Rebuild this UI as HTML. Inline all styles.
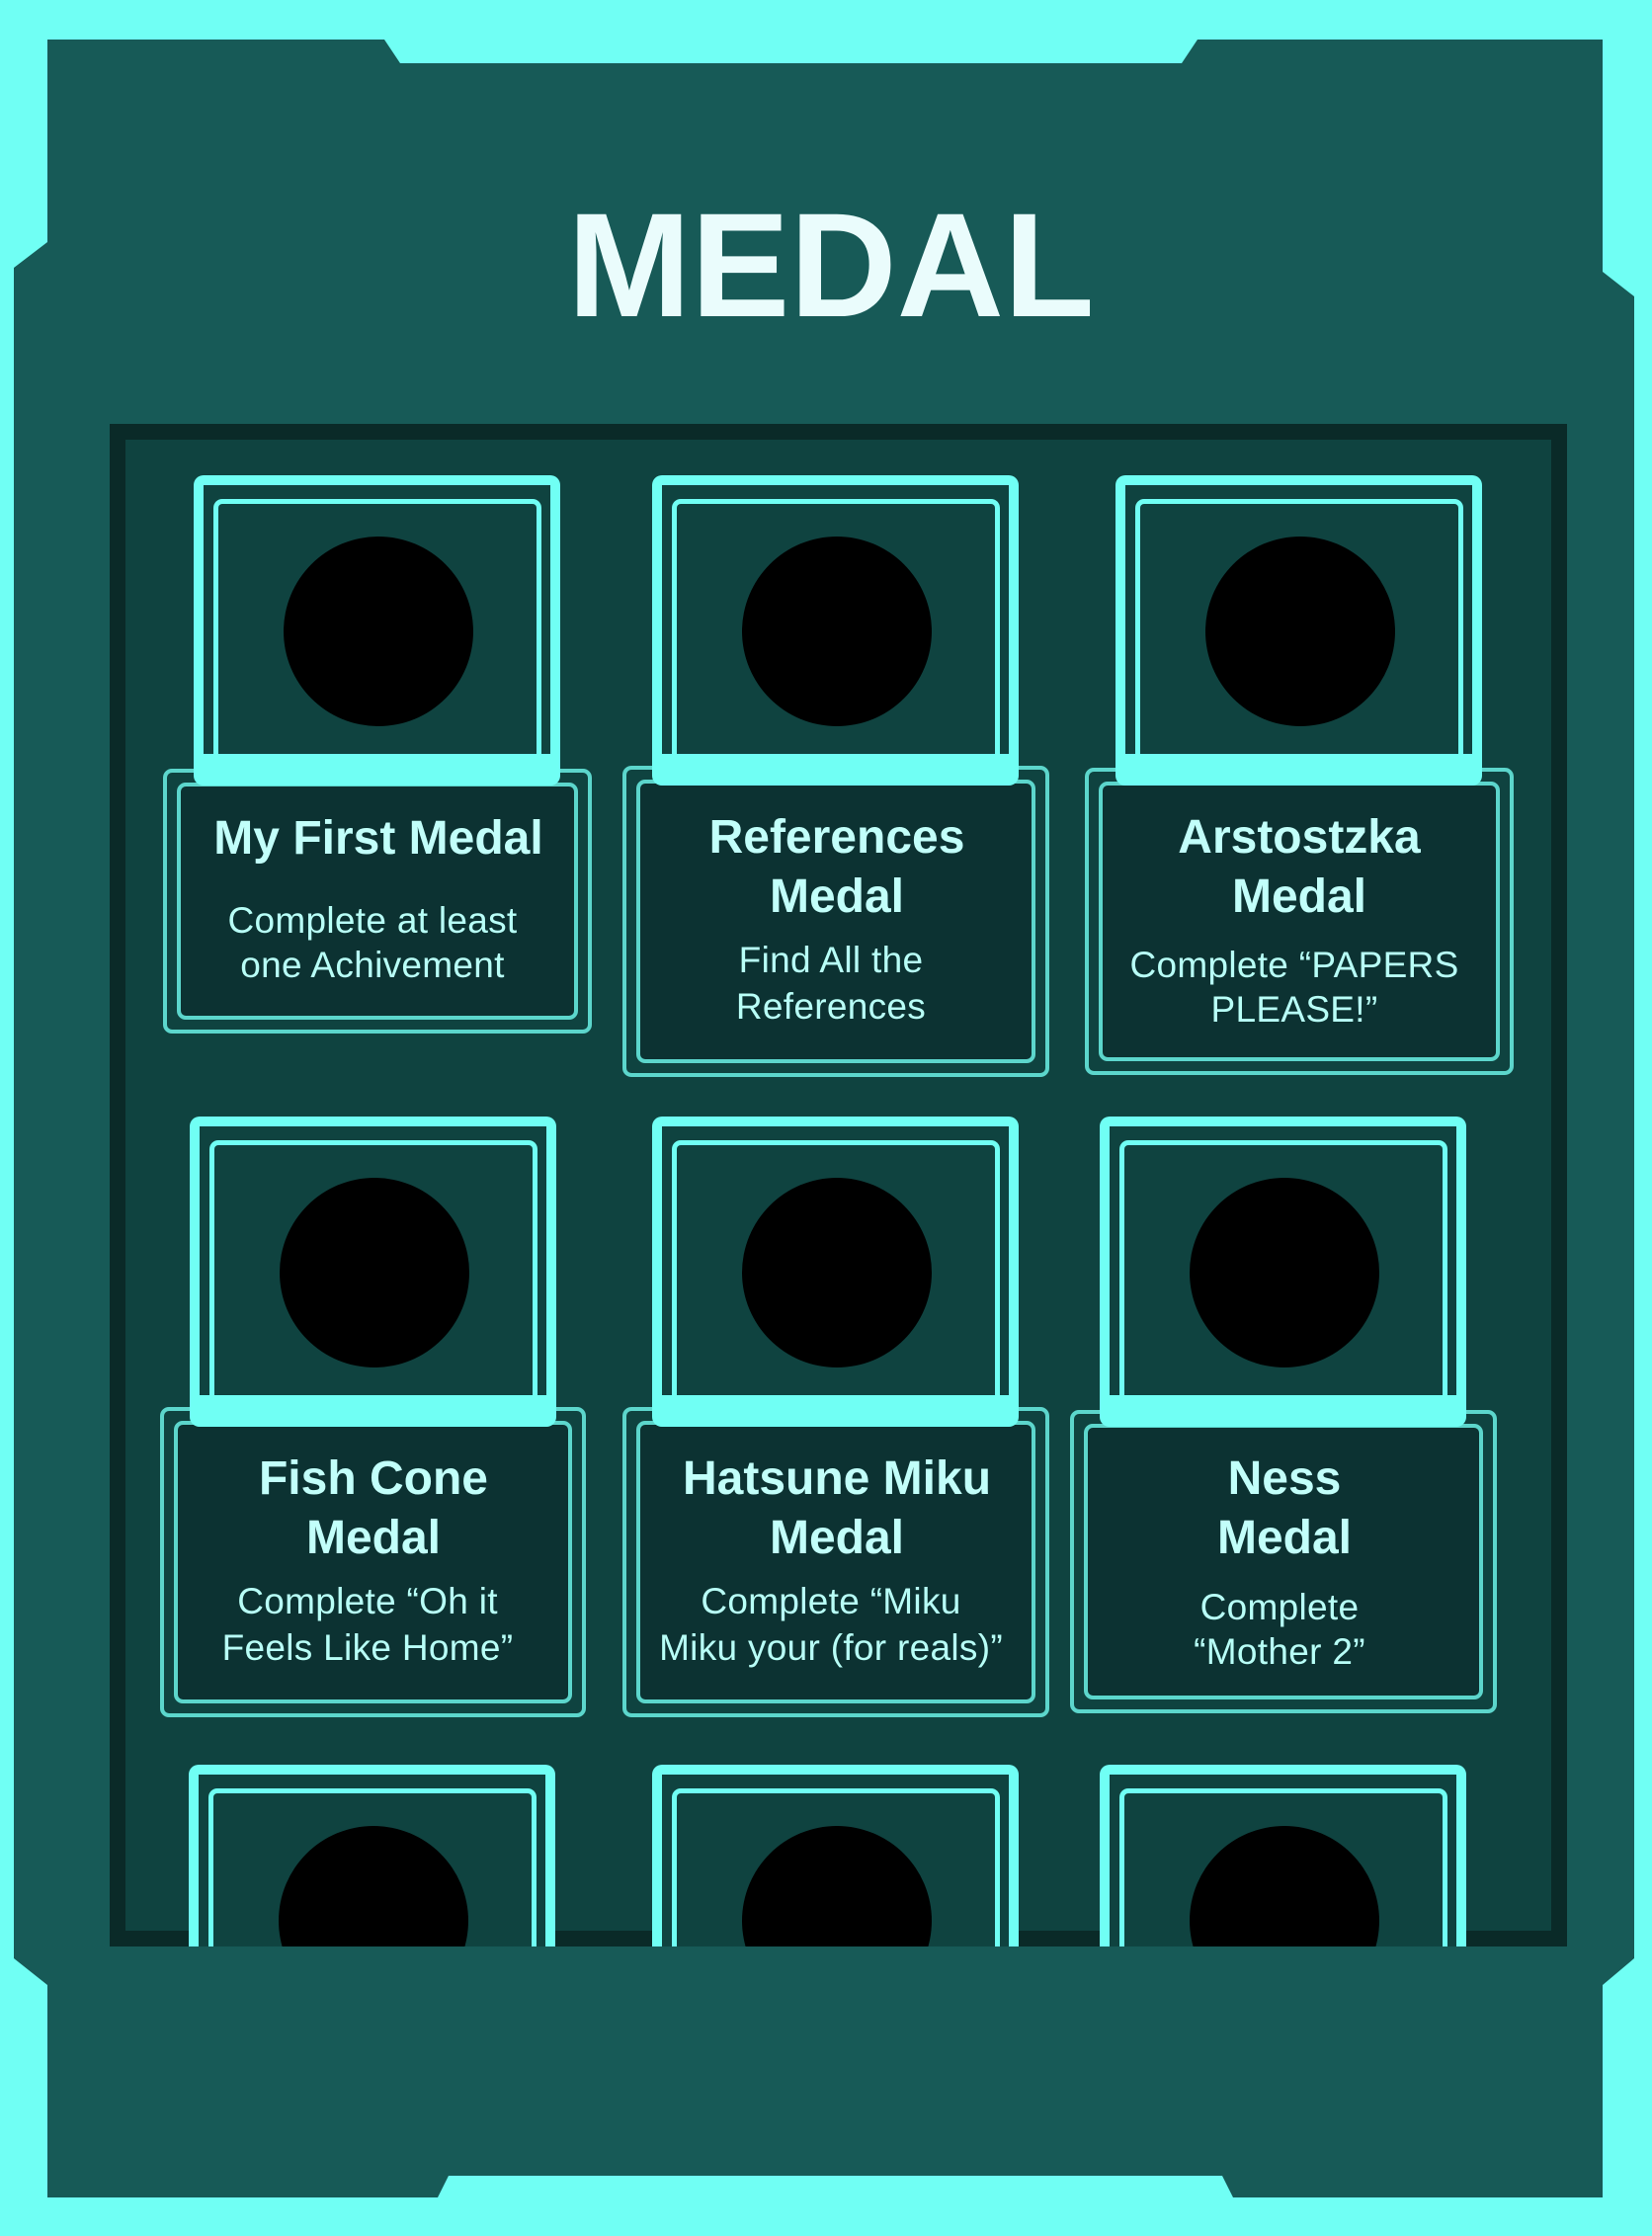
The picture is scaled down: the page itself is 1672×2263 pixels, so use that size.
<!DOCTYPE html>
<html><head><meta charset="utf-8">
<style>
*{margin:0;padding:0;box-sizing:border-box}
body{width:1672px;height:2263px;background:#70fff4;position:relative;overflow:hidden;font-family:"Liberation Sans",sans-serif}
.abs{position:absolute}
.frame{position:absolute;left:111px;top:429px;width:1475px;height:1541px;background:#0a2a28;}
.frame .in{position:absolute;left:16px;top:16px;right:16px;bottom:16px;background:#0f4340}
.clip{position:absolute;left:0;top:0;width:1672px;height:1970px;overflow:hidden}
.lab{position:absolute;border:4px solid #5cd6cc;border-radius:9px;background:#0f4340}
.lab .i{position:absolute;left:10px;top:10px;right:10px;bottom:10px;border:4px solid #5cd6cc;border-radius:9px;background:#0c3232}
.card{position:absolute;width:371px;height:314px;border:10px solid #70fff4;border-bottom-width:32px;border-radius:10px;background:#0f4340}
.card .t{position:absolute;left:10px;top:14px;width:332px;height:270px;border:5px solid #70fff4;border-bottom:none;border-radius:9px 9px 0 0}
.card .c{position:absolute;left:81px;top:52px;width:192px;height:192px;border-radius:50%;background:#000}
.tl{position:absolute;width:500px;text-align:center;font-weight:bold;font-size:48px;line-height:60px;color:#c2fffa;white-space:nowrap}
.sl{position:absolute;width:500px;text-align:center;font-size:37px;line-height:46px;color:#b8fff7;white-space:nowrap;letter-spacing:0.3px}
</style></head><body>
<svg class="abs" style="left:0;top:0" width="1672" height="2263">
<polygon fill="#175a57" points="48,40 389,40 405,64 1196,64 1212,40 1622,40 1622,275 1654,300 1654,1982 1622,2009 1622,2224 1248,2224 1237,2202 454,2202 443,2224 48,2224 48,2009 14,1982 14,271 48,245"/>
</svg>
<div class="abs" style="left:0;top:193px;width:1682px;text-align:center;font-weight:bold;font-size:150px;line-height:150px;color:#eafcfc">MEDAL</div>
<div class="frame"><div class="in"></div></div>
<div class="clip">
<div class="lab" style="left:165px;top:778px;width:434px;height:268px"><div class="i"></div></div>
<div class="lab" style="left:630px;top:775px;width:432px;height:315px"><div class="i"></div></div>
<div class="lab" style="left:1098px;top:777px;width:434px;height:311px"><div class="i"></div></div>
<div class="lab" style="left:162px;top:1424px;width:431px;height:314px"><div class="i"></div></div>
<div class="lab" style="left:630px;top:1424px;width:432px;height:314px"><div class="i"></div></div>
<div class="lab" style="left:1083px;top:1427px;width:432px;height:307px"><div class="i"></div></div>

<div class="card" style="left:196px;top:481px"><div class="t"></div><div class="c"></div></div>
<div class="card" style="left:660px;top:481px"><div class="t"></div><div class="c"></div></div>
<div class="card" style="left:1129px;top:481px"><div class="t"></div><div class="c"></div></div>
<div class="card" style="left:192px;top:1130px"><div class="t"></div><div class="c"></div></div>
<div class="card" style="left:660px;top:1130px"><div class="t"></div><div class="c"></div></div>
<div class="card" style="left:1113px;top:1130px"><div class="t"></div><div class="c"></div></div>
<div class="card" style="left:191px;top:1786px"><div class="t"></div><div class="c"></div></div>
<div class="card" style="left:660px;top:1786px"><div class="t"></div><div class="c"></div></div>
<div class="card" style="left:1113px;top:1786px"><div class="t"></div><div class="c"></div></div>

<div class="tl" style="left:133px;top:819px">My First Medal</div>
<div class="sl" style="left:127px;top:909px">Complete at least</div>
<div class="sl" style="left:127px;top:954px">one Achivement</div>

<div class="tl" style="left:597px;top:818px">References</div>
<div class="tl" style="left:597px;top:878px">Medal</div>
<div class="sl" style="left:591px;top:949px">Find All the</div>
<div class="sl" style="left:591px;top:996px">References</div>

<div class="tl" style="left:1065px;top:818px">Arstostzka</div>
<div class="tl" style="left:1065px;top:878px">Medal</div>
<div class="sl" style="left:1060px;top:954px">Complete “PAPERS</div>
<div class="sl" style="left:1060px;top:999px">PLEASE!”</div>

<div class="tl" style="left:128px;top:1467px">Fish Cone</div>
<div class="tl" style="left:128px;top:1527px">Medal</div>
<div class="sl" style="left:122px;top:1598px">Complete “Oh it</div>
<div class="sl" style="left:122px;top:1645px">Feels Like Home”</div>

<div class="tl" style="left:597px;top:1467px">Hatsune Miku</div>
<div class="tl" style="left:597px;top:1527px">Medal</div>
<div class="sl" style="left:591px;top:1598px">Complete “Miku</div>
<div class="sl" style="left:591px;top:1645px">Miku your (for reals)”</div>

<div class="tl" style="left:1050px;top:1467px">Ness</div>
<div class="tl" style="left:1050px;top:1527px">Medal</div>
<div class="sl" style="left:1045px;top:1604px">Complete</div>
<div class="sl" style="left:1045px;top:1649px">“Mother 2”</div>
</div>
</body></html>
